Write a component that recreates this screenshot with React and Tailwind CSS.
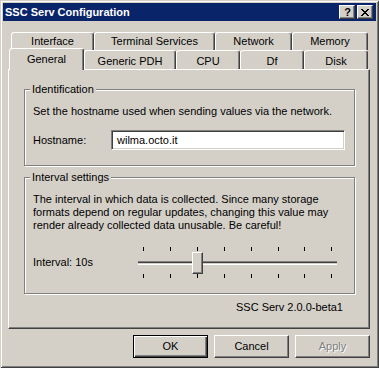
import React from "react";

const raised =
  "border border-t-white border-l-white border-r-[#404040] border-b-[#404040] shadow-[inset_-1px_-1px_#808080]";

function BackTab({ className, children }) {
  return (
    <div
      className={
        "flex justify-center h-[18px] pt-[2px] leading-[13px] bg-[#d4d0c8] border-t border-l border-r border-t-white border-l-white border-r-[#404040] rounded-t-[3px] shadow-[inset_-1px_0_#808080] " +
        className
      }
    >
      {children}
    </div>
  );
}

function FrontTab({ className, children }) {
  return (
    <div
      className={
        "flex justify-center mt-[2px] h-[19px] pt-[4px] leading-[13px] bg-[#d4d0c8] border-t border-l border-r border-t-white border-l-white border-r-[#404040] rounded-t-[3px] shadow-[inset_-1px_0_#808080] " +
        className
      }
    >
      {children}
    </div>
  );
}

function Group({ title, className, children }) {
  return (
    <div
      className={
        "relative border border-[#808080] shadow-[inset_1px_1px_#fff,1px_1px_#fff] pl-[8px] pr-[9px] pt-[15px] pb-[15px] " +
        className
      }
    >
      <span className="absolute -top-[7px] left-[5px] px-[2px] bg-[#d4d0c8] leading-[13px]">
        {title}
      </span>
      {children}
    </div>
  );
}

const ticks = [0, 27, 54, 81, 108, 135, 161, 188];

export default function App() {
  return (
    <div className="w-[379px] h-[368px] bg-[#d4d0c8] p-[3px] flex flex-col text-[11px] text-black font-['Liberation_Sans',Arial,sans-serif] shadow-[inset_1px_1px_#d4d0c8,inset_-1px_-1px_#404040,inset_2px_2px_#fff,inset_-2px_-2px_#808080] overflow-hidden">
      {/* Title bar */}
      <div className="h-[18px] bg-[#0a246a] flex items-center pl-[2px] pr-[3px]">
        <span className="text-white font-bold text-[11px] leading-[13px]">
          SSC Serv Configuration
        </span>
        <div className="ml-auto flex gap-[2px]">
          <div className={"w-[16px] h-[14px] bg-[#d4d0c8] flex items-center justify-center " + raised}>
            <span className="font-bold text-[11px] leading-[11px] pl-[1px]">?</span>
          </div>
          <div className={"w-[16px] h-[14px] bg-[#d4d0c8] flex items-center justify-center " + raised}>
            <svg width="8" height="7" viewBox="0 0 8 7" shapeRendering="crispEdges">
              <path d="M0 0h2v1h1v1h2v-1h1v-1h2v1h-1v1h-1v1h-1v1h1v1h1v1h1v1h-2v-1h-1v-1h-2v1h-1v1h-2v-1h1v-1h1v-1h1v-1h-1v-1h-1v-1h-1z" fill="#000" />
            </svg>
          </div>
        </div>
      </div>

      {/* Back tab row */}
      <div className="mt-[11px] ml-[8px] flex">
        <BackTab className="w-[83px]">Interface</BackTab>
        <BackTab className="w-[121px]">Terminal Services</BackTab>
        <BackTab className="w-[77px]">Network</BackTab>
        <BackTab className="w-[76px]">Memory</BackTab>
      </div>

      {/* Front tab row */}
      <div className="relative z-10 -mt-[2px] ml-[6px] h-[22px] flex items-start">
        <div className="w-[75px] h-[22px] flex justify-center pt-[4px] leading-[13px] bg-[#d4d0c8] border-t border-l border-r border-t-white border-l-white border-r-[#404040] rounded-t-[3px] shadow-[inset_-1px_0_#808080]">
          General
        </div>
        <FrontTab className="w-[92px]">Generic PDH</FrontTab>
        <FrontTab className="w-[64px]">CPU</FrontTab>
        <FrontTab className="w-[64px]">Df</FrontTab>
        <FrontTab className="w-[64px]">Disk</FrontTab>
      </div>

      {/* Panel */}
      <div className="-mt-[1px] ml-[5px] w-[362px] h-[260px] flex flex-col border border-t-white border-l-white border-r-[#404040] border-b-[#404040] shadow-[inset_-1px_-1px_#808080] pt-[19px] pl-[15px] pr-[14px]">
        <Group title="Identification">
          <div className="leading-[13px] whitespace-nowrap">
            Set the hostname used when sending values via the network.
          </div>
          <div className="mt-[12px] h-[20px] flex items-center">
            <span className="w-[78px] leading-[13px]">Hostname:</span>
            <div className="flex-1 h-[20px] bg-white flex items-center pl-[5px] border border-t-[#808080] border-l-[#808080] border-r-white border-b-white shadow-[inset_1px_1px_#404040,inset_-1px_-1px_#d4d0c8] leading-[13px]">
              wilma.octo.it
            </div>
          </div>
        </Group>

        <Group title="Interval settings" className="mt-[11px]">
          <div className="leading-[13px] whitespace-nowrap">
            The interval in which data is collected. Since many storage
            <br />
            formats depend on regular updates, changing this value may
            <br />
            render already collected data unusable. Be careful!
          </div>
          <div className="mt-[15px] h-[31px] flex items-center">
            <span className="w-[105px] leading-[13px]">Interval: 10s</span>
            <div className="relative w-[199px] h-[31px]">
              {ticks.map((x) => (
                <React.Fragment key={x}>
                  <div className="absolute top-0 w-px h-[4px] bg-black" style={{ left: 5 + x }} />
                  <div className="absolute top-[27px] w-px h-[4px] bg-black" style={{ left: 5 + x }} />
                </React.Fragment>
              ))}
              <div className="absolute left-0 right-0 top-[14px] h-[4px] border-t border-t-[#808080] border-b border-b-white bg-[#d4d0c8] shadow-[inset_0_1px_#404040]" />
              <div className={"absolute left-[54px] top-[5px] w-[11px] h-[22px] bg-[#d4d0c8] " + raised} />
            </div>
          </div>
        </Group>

        <div className="mt-[7px] text-right pr-[12px] leading-[13px]">SSC Serv 2.0.0-beta1</div>
      </div>

      {/* Buttons */}
      <div className="mt-[6px] ml-[5px] w-[362px] flex justify-end gap-[6px]">
        <div className="w-[75px] h-[23px] flex items-center justify-center border border-black shadow-[inset_1px_1px_#fff,inset_-1px_-1px_#404040,inset_-2px_-2px_#808080] leading-[13px]">
          OK
        </div>
        <div className={"w-[75px] h-[23px] flex items-center justify-center leading-[13px] " + raised}>
          Cancel
        </div>
        <div className={"w-[75px] h-[23px] flex items-center justify-center leading-[13px] text-[#808080] [text-shadow:1px_1px_0_#fff] " + raised}>
          Apply
        </div>
      </div>
    </div>
  );
}
